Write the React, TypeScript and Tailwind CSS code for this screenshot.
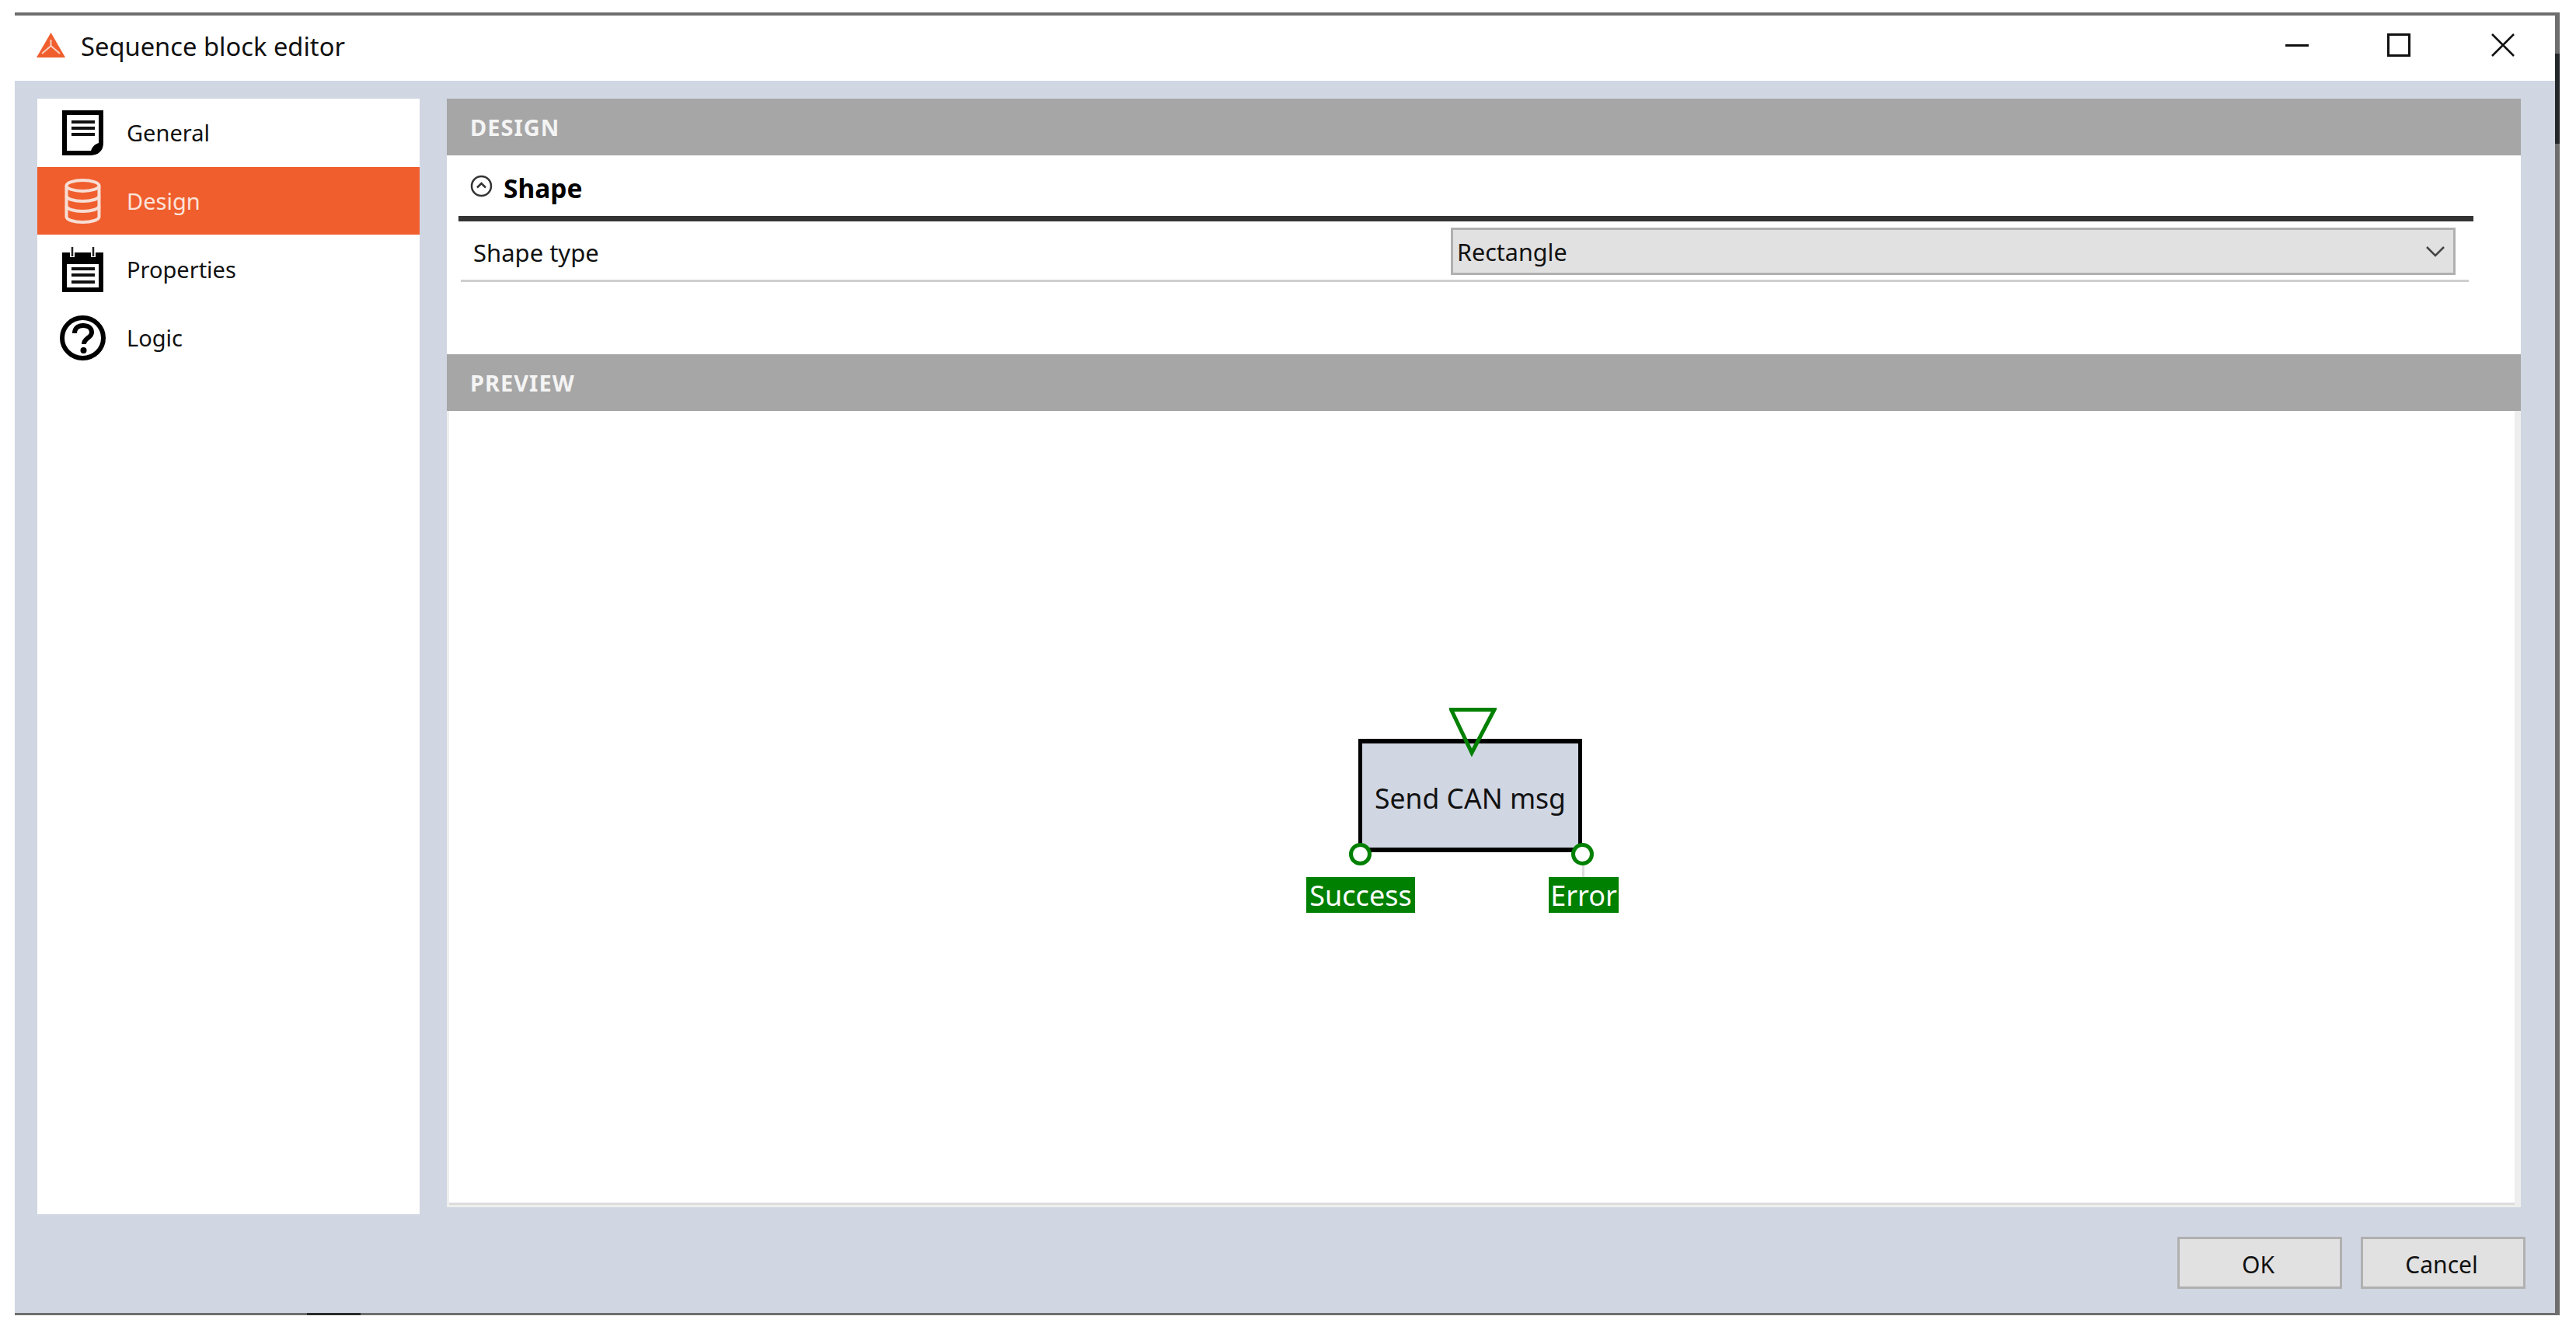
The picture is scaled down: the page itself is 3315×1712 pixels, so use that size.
import React from 'react'

const font = "font-['Noto_Sans',sans-serif]"

function GeneralIcon() {
  return (
    <svg viewBox="0 0 53 58" className="w-[53px] h-[58px]">
      <path d="M3 3H50V42C50 50 45 55 37 55H3Z" fill="#fff" stroke="#000" strokeWidth="6" />
      <path d="M36 56C38 46 42 43 51 41V46C50 52 45 56 38 56Z" fill="#000" />
      <path d="M12 15H42M12 23H42M12 31H42" stroke="#111" strokeWidth="4" />
    </svg>
  )
}

function DesignIcon() {
  return (
    <svg viewBox="0 0 47 58" className="w-[47px] h-[58px]" fill="none" stroke="#f7ddd3" strokeWidth="4">
      <ellipse cx="23.5" cy="9" rx="21" ry="7" />
      <path d="M2.5 9V49C2.5 53 12 56 23.5 56S44.500 53 44.500 49V9" />
      <path d="M2.500 22C2.500 26 12 29 23.500 29S44.500 26 44.500 22" />
      <path d="M2.500 35C2.500 39 12 42 23.500 42S44.500 39 44.500 35" />
    </svg>
  )
}

function PropertiesIcon() {
  return (
    <svg viewBox="0 0 53 58" className="w-[53px] h-[58px]">
      <path d="M0 7H53V58H0Z" fill="#000" />
      <path d="M6 22H47V52H6Z" fill="#fff" />
      <path d="M12 28H42M12 36H42M12 45H42" stroke="#111" strokeWidth="4" />
      <path d="M13 1V13M40 1V13" stroke="#fff" strokeWidth="6" />
      <path d="M13 0V12M40 0V12" stroke="#222" strokeWidth="2.500" />
    </svg>
  )
}

function LogicIcon() {
  return (
    <svg viewBox="0 0 59 58" className="w-[59px] h-[58px]" fill="none">
      <ellipse cx="29.500" cy="29" rx="26.500" ry="26" stroke="#000" strokeWidth="6" />
      <path d="M19 23C19 16 24 13 30 13C36 13 41 16 41 22C41 29 31 29 31 37" stroke="#000" strokeWidth="6" />
      <circle cx="30.500" cy="45" r="4" fill="#000" />
    </svg>
  )
}

const navItems = [
  { label: 'General', icon: <GeneralIcon /> },
  { label: 'Design', icon: <DesignIcon />, active: true },
  { label: 'Properties', icon: <PropertiesIcon /> },
  { label: 'Logic', icon: <LogicIcon /> },
]

function SectionHeader({ title }: { title: string }) {
  return (
    <div className="h-[73px] bg-[#a6a6a6] flex items-center pl-[30px] text-[29px] tracking-[1px] font-bold text-[#f4f4f4]">
      {title}
    </div>
  )
}

function Button({ label }: { label: string }) {
  return (
    <div className="w-[212px] h-[67px] border-[3px] border-[#b0b0b0] bg-[#e1e1e1] flex items-center justify-center pt-[3px] pr-[4px] text-[30px] text-[#111]">
      {label}
    </div>
  )
}

export default function App() {
  return (
    <div className={`w-[3315px] h-[1712px] bg-white pt-[16px] pl-[19px] overflow-hidden ${font}`}>
      <div className="relative w-[3275px] h-[1677px] flex flex-col border-t-4 border-r-[6px] border-b-[3px] border-[#6e6e6e] bg-white">
        {/* darker bits of the window behind */}
        <div className="absolute -right-[6px] top-[49px] w-[6px] h-[116px] bg-[#25282b]" />
        <div className="absolute -bottom-[3px] left-[376px] w-[69px] h-[3px] bg-[#2a2a2a]" />

        <div className="h-[84px] flex items-center pl-[28px] shrink-0">
          <svg viewBox="0 0 37 32" className="w-[37px] h-[32px] -mt-[8px]">
            <path d="M18.500 0L37 32H0Z" fill="#f05e2e" />
            <path d="M18.500 17V9M18.500 17L7 27M18.500 17L30 27" stroke="#fff" strokeWidth="2" strokeOpacity="0.7" fill="none" />
          </svg>
          <span className="ml-[20px] text-[32.700px] text-[#111] -mt-[4px]">Sequence block editor</span>
          <div className="ml-auto flex items-center h-full -mt-[8px]">
            <div className="w-[30px] h-[3px] bg-[#111]" />
            <div className="ml-[101px] w-[30px] h-[30px] border-[3px] border-[#111]" />
            <svg viewBox="0 0 30 30" className="ml-[104px] mr-[52px] w-[30px] h-[30px]">
              <path d="M1 1L29 29M29 1L1 29" stroke="#111" strokeWidth="2.500" />
            </svg>
          </div>
        </div>

        <div className="flex-1 bg-[#d0d6e2] flex flex-col">
          <div className="flex pt-[23px] pl-[29px] gap-[35px]">
            <nav className="w-[492px] h-[1436px] bg-white">
              {navItems.map(item => (
                <div
                  key={item.label}
                  className={`h-[87px] mb-px flex items-center pl-[29px] ${item.active ? 'bg-[#f05e2e] text-[#fbe3da]' : 'text-[#111]'}`}
                >
                  <div className="w-[59px] flex justify-center">{item.icon}</div>
                  <span className="ml-[27px] text-[29px]">{item.label}</span>
                </div>
              ))}
            </nav>

            <div className="w-[669px] grow-0 basis-[2669px] flex flex-col h-[1427px]">
              <SectionHeader title="DESIGN" />
              <div className="h-[256px] bg-white">
                <div className="h-[78px] flex items-center pl-[30px]">
                  <svg viewBox="0 0 29 29" className="w-[29px] h-[29px] mt-[1px]" fill="none" stroke="#333" strokeWidth="2.500">
                    <circle cx="14.500" cy="14.500" r="12.500" />
                    <path d="M9 16.500L14.500 11L20 16.500" />
                  </svg>
                  <span className="ml-[14px] pt-[6px] text-[33.500px] font-bold text-black">Shape</span>
                </div>
                <div className="ml-[15px] w-[2593px] h-[7px] bg-[#333]" />
                <div className="ml-[18px] w-[2584px] h-[78px] border-b-[3px] border-[#cfcfcf] flex items-start pt-[8px] pl-[16px]">
                  <span className="w-[1258px] h-[61px] flex items-center pt-[3px] text-[31px] text-[#111]">Shape type</span>
                  <div className="w-[1293px] h-[61px] border-[3px] border-[#b0b0b0] bg-[#e1e1e1] flex items-center pl-[5px] pr-[11px] text-[30.500px] text-[#111]">
                    <span className="pt-[3px]">Rectangle</span>
                    <svg viewBox="0 0 24 14" className="ml-auto w-[24px] h-[14px]" fill="none" stroke="#444" strokeWidth="2.500">
                      <path d="M1 1L12 12L23 1" />
                    </svg>
                  </div>
                </div>
              </div>
              <SectionHeader title="PREVIEW" />
              <div className="relative flex-1 bg-white border-l-[3px] border-b-[3px] border-r-[8px] border-[#eeeeee] shadow-[inset_0_-3px_0_#dcdcdc]">
                {/* block */}
                <div className="absolute left-[1170px] top-[422px] w-[288px] h-[146px] border-x-[5px] border-y-[6px] border-black bg-[#d0d6e2] flex items-center justify-center pt-[7px] text-[35.500px] text-[#111] whitespace-nowrap">
                  Send CAN msg
                </div>
                <svg viewBox="0 0 61 63" className="absolute left-[1287px] top-[382px] w-[61px] h-[63px]" fill="none">
                  <path d="M2.500 2.500H58L29 58Z" stroke="#008000" strokeWidth="5" />
                </svg>
                {/* ports */}
                <div className="absolute left-[1158px] top-[556px] w-[29px] h-[29px] rounded-full border-[5px] border-[#008000] bg-white" />
                <div className="absolute left-[1444px] top-[556px] w-[29px] h-[29px] rounded-full border-[5px] border-[#008000] bg-white" />
                <div className="absolute left-[1458px] top-[585px] w-[3px] h-[15px] bg-[#dddddd]" />
                <div className="absolute left-[1103px] top-[600px] w-[140px] h-[46px] bg-[#008000] flex items-center justify-center pt-[2px] text-[36px] text-white whitespace-nowrap">
                  Success
                </div>
                <div className="absolute left-[1415px] top-[600px] w-[90px] h-[46px] bg-[#008000] flex items-center justify-center pt-[2px] text-[36px] text-white">
                  Error
                </div>
              </div>
            </div>
          </div>
          <div className="flex justify-end gap-[24px] pt-[29px] pr-[38px]">
            <Button label="OK" />
            <Button label="Cancel" />
          </div>
        </div>
      </div>
    </div>
  )
}
